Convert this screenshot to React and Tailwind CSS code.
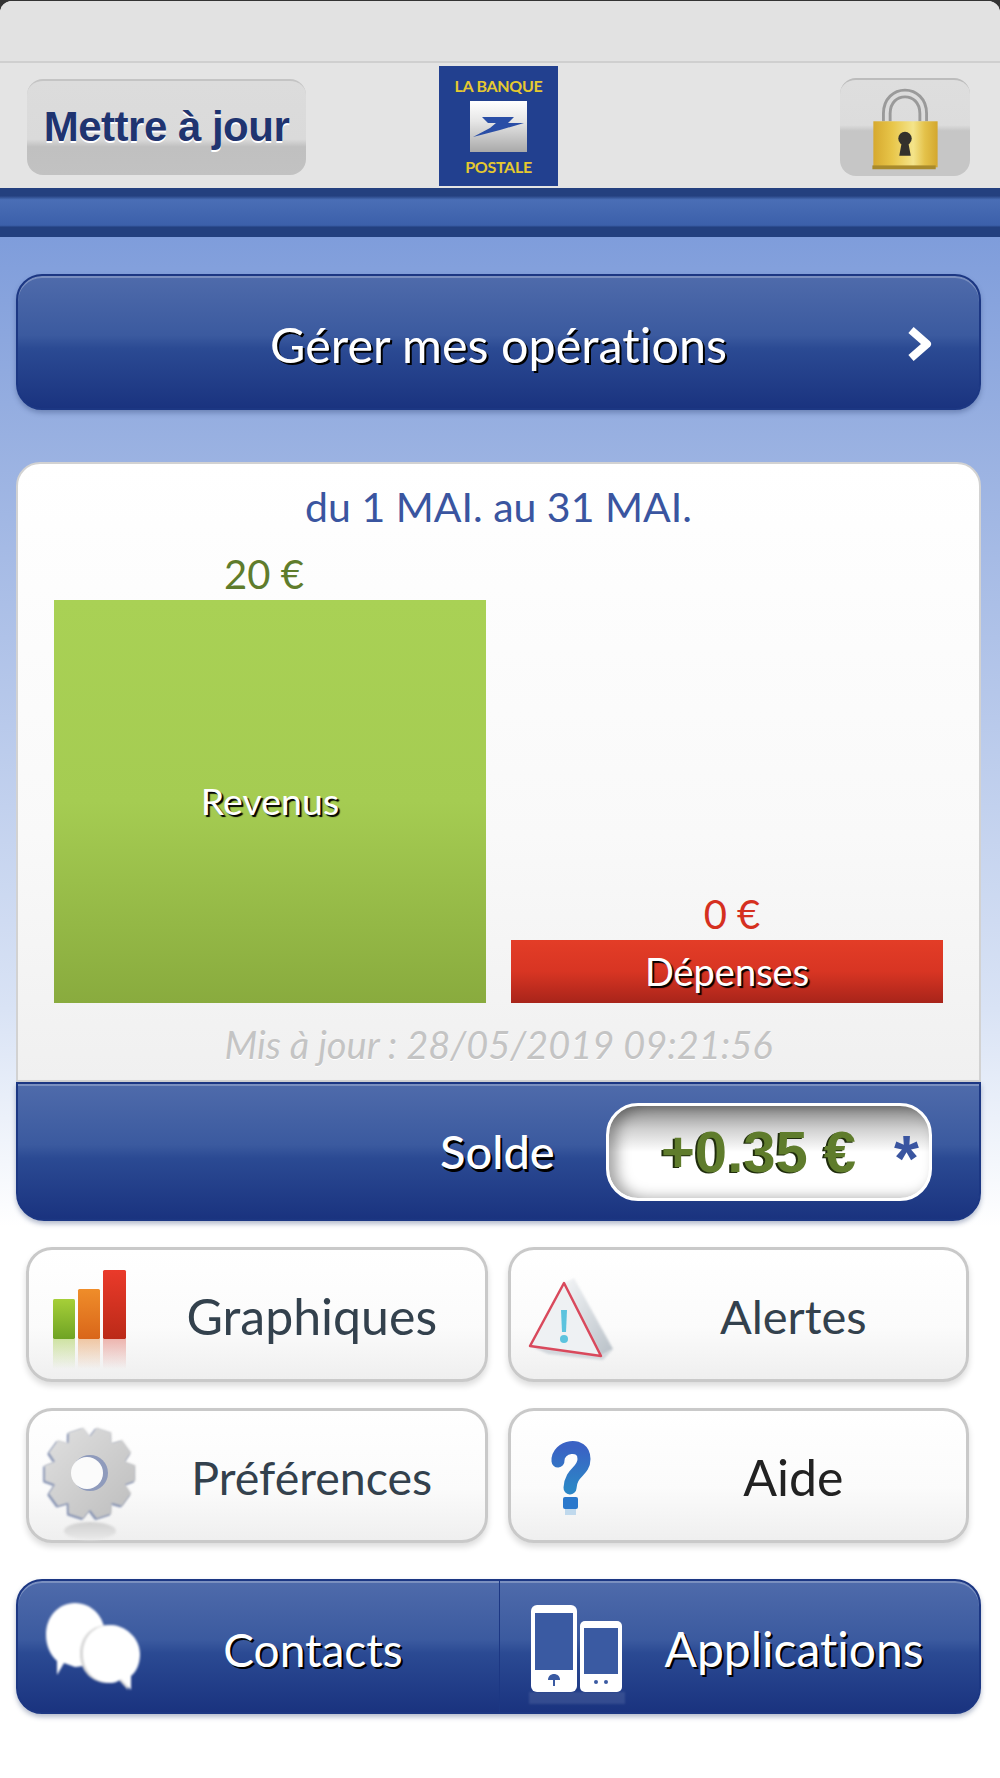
const BLUE_BTN =
  "bg-[linear-gradient(to_bottom,#4f6bab_0%,#3b5a9f_45%,#2b4a93_55%,#1a337f_100%)] border-2 border-[#1c3783] shadow-[inset_0_2px_0_rgba(255,255,255,0.25),0_3px_5px_rgba(40,60,110,0.35)]";
const WHITE_BTN =
  "relative flex items-center h-[135px] rounded-[26px] border-[3px] border-[#c9c9c9] bg-[linear-gradient(to_bottom,#ffffff_0%,#fbfbfb_60%,#efefef_100%)] shadow-[0_4px_6px_rgba(0,0,0,0.14)]";

const ChartIcon = () => (
  <svg viewBox="3 0 110 134" className="w-[110px] h-[134px] shrink-0 overflow-visible">
    <defs>
      <linearGradient id="gGreen" x1="0" y1="0" x2="0" y2="1">
        <stop offset="0" stopColor="#a6cf38" />
        <stop offset="1" stopColor="#6fa324" />
      </linearGradient>
      <linearGradient id="gOrange" x1="0" y1="0" x2="0" y2="1">
        <stop offset="0" stopColor="#ef8d2a" />
        <stop offset="1" stopColor="#d9661a" />
      </linearGradient>
      <linearGradient id="gRed" x1="0" y1="0" x2="0" y2="1">
        <stop offset="0" stopColor="#ea3a2a" />
        <stop offset="1" stopColor="#bb2a18" />
      </linearGradient>
      <linearGradient id="rGreen" x1="0" y1="0" x2="0" y2="1">
        <stop offset="0" stopColor="#9cc83a" stopOpacity="0.45" />
        <stop offset="1" stopColor="#9cc83a" stopOpacity="0" />
      </linearGradient>
      <linearGradient id="rOrange" x1="0" y1="0" x2="0" y2="1">
        <stop offset="0" stopColor="#e58a3c" stopOpacity="0.45" />
        <stop offset="1" stopColor="#e58a3c" stopOpacity="0" />
      </linearGradient>
      <linearGradient id="rRed" x1="0" y1="0" x2="0" y2="1">
        <stop offset="0" stopColor="#dc5040" stopOpacity="0.4" />
        <stop offset="1" stopColor="#dc5040" stopOpacity="0" />
      </linearGradient>
    </defs>
    <rect x="27" y="51" width="22" height="40" rx="1.5" fill="url(#gGreen)" />
    <rect x="52" y="41" width="22" height="50" rx="1.5" fill="url(#gOrange)" />
    <rect x="77" y="22" width="23" height="69" rx="1.5" fill="url(#gRed)" />
    <rect x="27" y="91" width="22" height="30" fill="url(#rGreen)" />
    <rect x="52" y="91" width="22" height="30" fill="url(#rOrange)" />
    <rect x="77" y="91" width="23" height="30" fill="url(#rRed)" />
  </svg>
);

const AlertIcon = () => (
  <svg viewBox="3 0 110 134" className="w-[110px] h-[134px] shrink-0 overflow-visible">
    <defs>
      <linearGradient id="gTri" x1="0" y1="0" x2="1" y2="1">
        <stop offset="0" stopColor="#f1f3f5" />
        <stop offset="1" stopColor="#a9b3bc" />
      </linearGradient>
    </defs>
    <path d="M56 35 L66 30 L105 101 L93 108 Z" fill="url(#gTri)" opacity="0.8" className="blur-[1px]" />
    <path d="M22 98 L93 108 L105 101 L95 112 L40 106 Z" fill="#c3cad1" opacity="0.7" className="blur-[1px]" />
    <path d="M56 35 L93 108 L22 98 Z" fill="#eef1f3" stroke="#d9495c" strokeWidth="2.5" strokeLinejoin="round" />
    <path d="M53 62 L59 62 L58 84 L54 84 Z" fill="#5cc3de" />
    <circle cx="56" cy="91" r="4" fill="#5cc3de" />
  </svg>
);

const gearPath = () => {
  const cx = 62;
  const cy = 64;
  const pts = [];
  const teeth = 10;
  for (let i = 0; i < teeth; i++) {
    const a = (i / teeth) * Math.PI * 2;
    const step = (Math.PI * 2) / teeth;
    [
      [37, -0.5],
      [46, -0.27],
      [46, 0.27],
      [37, 0.5],
    ].forEach(([r, o]) => {
      const t = a + o * step;
      pts.push(`${(cx + r * Math.cos(t)).toFixed(1)} ${(cy + r * Math.sin(t)).toFixed(1)}`);
    });
  }
  return `M${pts.join(" L")} Z`;
};

const GearIcon = () => (
  <svg viewBox="1 0 110 134" className="w-[110px] h-[134px] shrink-0 overflow-visible">
    <defs>
      <linearGradient id="gGear" x1="0" y1="0" x2="1" y2="1">
        <stop offset="0" stopColor="#e0e0e0" />
        <stop offset="1" stopColor="#bdbdbd" />
      </linearGradient>
      <linearGradient id="gGearR" x1="0" y1="0" x2="0" y2="1">
        <stop offset="0" stopColor="#d0d0d0" />
        <stop offset="1" stopColor="#eaeaea" />
      </linearGradient>
    </defs>
    <ellipse cx="62" cy="122" rx="26" ry="9" fill="url(#gGearR)" className="blur-[1px]" />
    <path d={gearPath()} fill="#7f8db0" transform="translate(-1.5 1.5)" className="blur-[1px]" />
    <path d={gearPath()} fill="url(#gGear)" className="blur-[1px]" />
    <circle cx="62" cy="64" r="18" fill="#8f9bbc" className="blur-[0.5px]" />
    <circle cx="59" cy="64" r="16" fill="#fbfbfb" className="blur-[0.5px]" />
  </svg>
);

const HelpIcon = () => (
  <svg viewBox="3 0 110 134" className="w-[110px] h-[134px] shrink-0 overflow-visible">
    <defs>
      <linearGradient id="gHelp" x1="0" y1="0" x2="0" y2="1">
        <stop offset="0" stopColor="#3a62c4" />
        <stop offset="1" stopColor="#2c86c6" />
      </linearGradient>
    </defs>
    <g className="blur-[0.7px]">
      <path d="M50 52 C49 37 76 32 76 50 C76 63 63 62 62 79" fill="none" stroke="url(#gHelp)" strokeWidth="13" strokeLinecap="round" />
      <rect x="55" y="88" width="15" height="12" rx="2" fill="#2a78cc" />
      <rect x="57" y="100" width="11" height="6" fill="#a9cdea" opacity="0.7" />
    </g>
  </svg>
);

const ChatIcon = () => (
  <svg viewBox="2 2 109 131" className="w-[109px] h-[131px] shrink-0 overflow-visible">
    <g className="blur-[0.8px]">
      <path d="M30 56 C30 38 42 24 59 24 C76 24 89 38 89 56 C89 74 76 88 59 88 L48 84 L41 96 L41 82 C34 76 30 66 30 56 Z" fill="#fff" />
      <path d="M67 75 C67 57 79 46 95 46 C111 46 124 58 124 75 C124 84 121 92 115 97 L115 111 L105 100 C101 103 98 104 95 104 C79 104 67 92 67 75 Z" fill="#d7d7d7" transform="translate(-3 0)" />
      <path d="M67 75 C67 57 79 46 95 46 C108 46 124 58 124 75 C124 84 121 92 115 97 L115 111 L105 100 C101 103 98 104 95 104 C79 104 67 92 67 75 Z" fill="#fff" />
    </g>
  </svg>
);

const PhonesIcon = () => (
  <svg viewBox="1 2 109 131" className="w-[109px] h-[131px] shrink-0 overflow-visible">
    <g className="blur-[0.4px]">
      <rect x="32" y="26" width="46" height="87" rx="6" fill="#fff" />
      <rect x="36" y="34" width="38" height="57" fill="#3a5aa2" />
      <path d="M49 101 C49 93 61 93 61 101 Z" fill="#3a5aa2" />
      <rect x="54" y="99" width="2" height="8" fill="#3a5aa2" />
      <rect x="81" y="42" width="42" height="71" rx="5" fill="#fff" />
      <rect x="85" y="49" width="34" height="46" fill="#3a5aa2" />
      <circle cx="97" cy="103" r="2" fill="#3a5aa2" />
      <circle cx="107" cy="103" r="2" fill="#3a5aa2" />
    </g>
    <rect x="30" y="113" width="96" height="12" fill="#fff" opacity="0.1" className="blur-[1px]" />
  </svg>
);

const LockIcon = () => (
  <svg viewBox="0 0 130 98" className="w-[126px] h-[94px]">
    <defs>
      <linearGradient id="gGold" x1="0" y1="0" x2="1" y2="0">
        <stop offset="0" stopColor="#d6a92e" />
        <stop offset="0.3" stopColor="#e8c64a" />
        <stop offset="0.62" stopColor="#f4e48a" />
        <stop offset="0.8" stopColor="#e4c24a" />
        <stop offset="1" stopColor="#d3a72e" />
      </linearGradient>
    </defs>
    <path d="M46 42 V34 C46 6 84 6 84 34 V42" fill="none" stroke="#9a9a9a" strokeWidth="10" />
    <path d="M46 42 V34 C46 6 84 6 84 34 V42" fill="none" stroke="#dcdcdc" strokeWidth="4" />
    <rect x="32" y="42" width="67" height="48" fill="url(#gGold)" />
    <rect x="31" y="88" width="66" height="4" fill="#a88a2c" />
    <circle cx="65" cy="60" r="7" fill="#33312c" />
    <path d="M62 62 L68 62 L71 78 L59 78 Z" fill="#33312c" />
  </svg>
);

const Logo = () => (
  <div className="w-[119px] h-[120px] bg-[#22408f] flex flex-col items-center font-['Lato',sans-serif] font-bold text-[#e6c92f]">
    <div className="text-[16px] leading-[20px] mt-[10px] tracking-[-0.3px]">LA BANQUE</div>
    <div className="w-[57px] h-[51px] mt-[5px] bg-[linear-gradient(to_bottom,#ffffff,#e6e6e6_40%,#a9a9a9)]">
      <svg viewBox="0 0 57 51" className="w-full h-full">
        <path d="M12 16 L44 16 L38 22 L54 22 L30 29 L3 36 L20 27 L26 22 L18 22 Z" fill="#2a4ea6" />
      </svg>
    </div>
    <div className="text-[16px] leading-[20px] mt-[5px] tracking-[-0.3px]">POSTALE</div>
  </div>
);

export default function App() {
  return (
    <div className="w-[1000px] h-[1778px] overflow-hidden bg-[#333] pt-px font-['Lato',sans-serif] [font-variant-ligatures:none]">
      <div className="h-full rounded-t-[12px] overflow-hidden flex flex-col bg-white">
        {/* status strip */}
        <div className="h-[62px] shrink-0 bg-[#e2e2e2] border-b-2 border-[#cfcfcf]" />

        {/* header */}
        <div className="h-[125px] shrink-0 bg-[#e4e4e4] pl-[27px] pr-[30px] flex items-start">
          <div className="mt-[16px] pb-[4px] w-[279px] h-[96px] rounded-[16px] border-t-2 border-[#c4c4c4] bg-[linear-gradient(to_bottom,#dcdcdc_0%,#dadada_62%,#c0c0c0_70%,#c2c2c2_100%)] flex items-center justify-center font-['Liberation_Sans',sans-serif] font-bold text-[42px] tracking-[-0.5px] text-[#1f3470] [text-shadow:0_2px_0_#fff]">
            Mettre à jour
          </div>
          <div className="mt-[3px] ml-[133px]">
            <Logo />
          </div>
          <div className="mt-[15px] ml-auto w-[130px] h-[98px] rounded-[16px] border-t-2 border-[#bcbcbc] bg-[linear-gradient(to_bottom,#dedede_0%,#dcdcdc_47%,#c6c6c6_53%,#c6c6c6_100%)] flex items-center justify-center">
            <LockIcon />
          </div>
        </div>

        {/* blue band */}
        <div className="h-[49px] shrink-0 bg-[linear-gradient(to_bottom,#24407f_0%,#24407f_16%,#4a6eb6_24%,#3c60aa_76%,#23407f_80%,#23407f_100%)]" />

        {/* body */}
        <div className="flex-1 pl-[16px] pr-[19px] pt-[37px] bg-[linear-gradient(to_bottom,#7f9ddb_0%,#98b0e1_20%,#d9e3f5_78%,#ffffff_100%)] bg-[length:100%_990px] bg-no-repeat">
          <div className={`${BLUE_BTN} relative h-[136px] rounded-[26px] flex items-center justify-center pt-[4px] text-white text-[48.5px] [text-shadow:2px_2px_0_#000]`}>
            Gérer mes opérations
            <svg viewBox="0 0 26 34" className="absolute right-[47px] top-[51px] w-[26px] h-[34px]">
              <path d="M5 3 L21 17 L5 31" fill="none" stroke="#fff" strokeWidth="8" strokeLinejoin="round" />
            </svg>
          </div>

          {/* chart card */}
          <div className="mt-[52px] h-[620px] rounded-t-[24px] border-2 border-[#d2d2d2] bg-[linear-gradient(to_bottom,#ffffff_0%,#f9f9f9_60%,#f0f0f0_100%)] flex flex-col items-stretch">
            <div className="mt-[19px] text-center text-[41px] leading-[48px] text-[#3a55a0]">du 1 MAI. au 31 MAI.</div>
            <div className="mt-[38px] h-[434px] pl-[36px] pr-[36px] flex items-end justify-between">
              <div className="w-[432px] flex flex-col">
                <div className="text-[40px] leading-[48px] text-[#5f7c2c] text-center pr-[12px] mb-[2px]">20 €</div>
                <div className="h-[403px] bg-[linear-gradient(to_bottom,#a9d155_0%,#a5cc52_50%,#89ab3e_100%)] flex items-center justify-center text-white text-[37.5px] [text-shadow:2px_2px_1px_#000]">
                  Revenus
                </div>
              </div>
              <div className="w-[432px] flex flex-col">
                <div className="text-[40px] leading-[48px] text-[#d5301f] text-center pl-[10px] mb-[2px]">0 €</div>
                <div className="h-[63px] bg-[linear-gradient(to_bottom,#e33d27_0%,#d83523_50%,#a8241a_100%)] flex items-center justify-center text-white text-[38px] [text-shadow:2px_2px_1px_#000]">
                  Dépenses
                </div>
              </div>
            </div>
            <div className="mt-[19px] text-center italic text-[38px] leading-[44px] text-[#c4c4c4] [text-shadow:0_1px_0_#fff]">
              Mis à jour : 28/05/2019 09:21:56
            </div>
          </div>

          {/* solde */}
          <div className={`${BLUE_BTN} h-[139px] rounded-b-[28px] pl-[422px] flex items-center`}>
            <div className="w-[166px] text-white text-[47px] font-medium [text-shadow:2px_3px_0_#000]">Solde</div>
            <div className="relative h-[98px] w-[326px] rounded-[32px] border-[3px] border-white bg-[linear-gradient(to_bottom,#8a8a8a_0%,#d0d0d0_25%,#ffffff_50%)] shadow-[inset_8px_0_14px_rgba(0,0,0,0.35)] flex items-center pl-[52px] font-['Liberation_Sans',sans-serif] font-bold text-[58px] leading-[66px] text-[#5f7c2c] [text-shadow:-2px_1px_0_#1f2c0c]">
              <span className="whitespace-nowrap">+0.35 €</span>
              <span className="absolute right-[10px] top-[20px] text-[64px] text-[#3a55a0] [text-shadow:none]">*</span>
            </div>
          </div>

          {/* tiles */}
          <div className="mt-[26px] ml-[10px] mr-[12px] grid grid-cols-2 gap-x-[20px] gap-y-[26px] text-[#33414d]">
            <div className={WHITE_BTN}>
              <ChartIcon />
              <span className="flex-1 text-center pt-[4px] text-[50px]">Graphiques</span>
            </div>
            <div className={WHITE_BTN}>
              <AlertIcon />
              <span className="flex-1 text-center pt-[4px] text-[47px]">Alertes</span>
            </div>
            <div className={WHITE_BTN}>
              <GearIcon />
              <span className="flex-1 text-center pt-[4px] text-[46.5px]">Préférences</span>
            </div>
            <div className={WHITE_BTN}>
              <HelpIcon />
              <span className="flex-1 text-center pt-[4px] text-[50px] text-[#222]">Aide</span>
            </div>
          </div>

          {/* bottom bar */}
          <div className={`${BLUE_BTN} mt-[36px] h-[135px] rounded-[26px] grid grid-cols-[482px_1fr] text-white [text-shadow:2px_2px_0_#000]`}>
            <div className="h-[131px] flex items-center border-r border-[#1c3783]">
              <ChatIcon />
              <span className="flex-1 text-center pt-[5px] text-[46px]">Contacts</span>
            </div>
            <div className="h-[131px] flex items-center">
              <PhonesIcon />
              <span className="flex-1 text-center pt-[5px] text-[48px]">Applications</span>
            </div>
          </div>
        </div>
      </div>
    </div>
  );
}
